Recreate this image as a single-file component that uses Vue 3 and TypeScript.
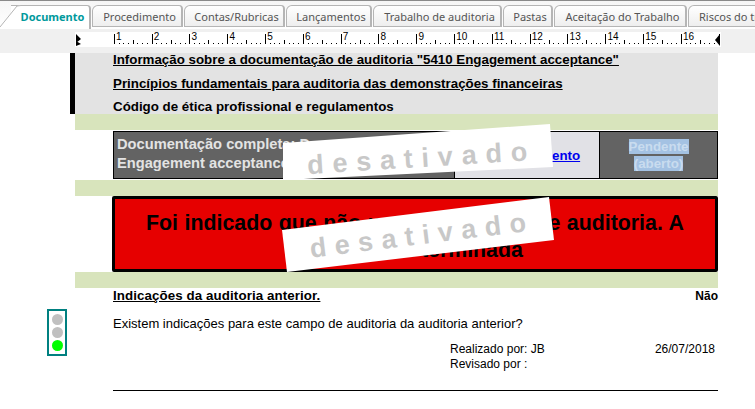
<script setup lang="ts">
const tabs = [
  { label: 'Documento', w: 80, active: true },
  { label: 'Procedimento', w: 91 },
  { label: 'Contas/Rubricas', w: 101 },
  { label: 'Lançamentos', w: 86 },
  { label: 'Trabalho de auditoria', w: 129 },
  { label: 'Pastas', w: 50 },
  { label: 'Aceitação do Trabalho', w: 133 },
  { label: 'Riscos do trabalho', w: 113 }
]
const step = 37.8 / 8
const ticks = Array.from({ length: 137 }, (_, i) => {
  const x = 2 + i * step
  const major = i % 8 === 0
  const mid = i % 4 === 0
  return { x, h: major ? 10 : mid ? 4 : 1, key: i }
})
const nums = Array.from({ length: 16 }, (_, i) => ({ n: i + 1, x: 41 + i * 37.8 }))
</script>

<template>
  <div class="app">
    <div class="topline"></div>
    <nav class="tabs">
      <div
        v-for="t in tabs"
        :key="t.label"
        class="tab"
        :class="{ active: t.active }"
        :style="{ width: t.w + 'px' }"
      >
        <svg v-if="t.active" class="slant" width="21" height="22" viewBox="0 0 21 22">
          <path d="M0 22 L17 1 L21 0 L21 22 Z" fill="#fff" />
          <path d="M0 22 L17 1 L21 0.5" fill="none" stroke="#b5b5b5" />
        </svg>
        <span class="lbl">{{ t.label }}</span>
      </div>
    </nav>
    <div class="rulerbar">
      <svg class="ruler" width="646" height="15" viewBox="0 0 646 15">
        <rect width="646" height="15" fill="#fff" />
        <rect v-for="t in ticks" :key="t.key" :x="Math.round(t.x + 37.8 - 1)" :y="12 - t.h" width="1" :height="t.h" fill="#000" />
        <text v-for="n in nums" :key="n.n" :x="n.x" y="8" class="num">{{ n.n }}</text>
        <path d="M1 2 L6 7 L1 11 Z M1 9 L6 12 L1 14 Z" fill="#000" />
        <path d="M645 2 L640 8 L645 14 Z" fill="#000" />
      </svg>
    </div>
    <main class="page">
      <section class="links">
        <a class="lnk">Informação sobre a documentação de auditoria "5410 Engagement acceptance"</a>
        <a class="lnk">Princípios fundamentais para auditoria das demonstrações financeiras</a>
        <div class="lnk plain">Código de ética profissional e regulamentos</div>
      </section>
      <div class="green"></div>
      <section class="statuswrap">
        <div class="statusrow">
          <div class="cell-title">Documentação completa: Documento<br />Engagement acceptance</div>
          <div class="cell-link"><a>Ver documento</a></div>
          <div class="cell-state"><span>Pendente</span><br /><span>(aberto)</span></div>
        </div>
      </section>
      <div class="green"></div>
      <section class="alert">
        <p>Foi indicado que não usa este campo de auditoria. A revisão foi terminada</p>
      </section>
      <div class="green"></div>
      <section class="bottom">
        <div class="light">
          <i></i><i></i><i class="on"></i>
        </div>
        <div class="info">
          <div class="head"><span class="h">Indicações da auditoria anterior.</span><b>Não</b></div>
          <p class="q">Existem indicações para este campo de auditoria da auditoria anterior?</p>
          <div class="sign">
            <div class="who">Realizado por: JB<br />Revisado por :</div>
            <div class="date">26/07/2018</div>
          </div>
          <div class="rule"></div>
        </div>
      </section>
    </main>
    <div class="stamp s1"><span>desativado</span></div>
    <div class="stamp s2"><span>desativado</span></div>
  </div>
</template>

<style scoped>
.app {
  position: relative;
  width: 755px;
  height: 409px;
  overflow: hidden;
  background: #fff;
  font-family: "Liberation Sans", Arial, sans-serif;
  color: #000;
}
.topline {
  height: 1px;
  background: #8a8a8a;
}
.tabs {
  display: flex;
  height: 28px;
  padding: 4px 0 0 11px;
  box-sizing: border-box;
  background: linear-gradient(#f6f6f6, #fff);
  overflow: hidden;
}
.tab {
  position: relative;
  flex: none;
  box-sizing: border-box;
  height: 22px;
  margin-right: 1px;
  padding-left: 5px;
  border: 1px solid #b5b5b5;
  border-right-width: 2px;
  border-radius: 6px 4px 0 0;
  background: linear-gradient(#ffffff, #eeeeee);
  text-align: center;
  font: 11px/21px "Noto Sans", sans-serif;
  color: #555;
  white-space: nowrap;
}
.tab.active {
  background: #fff;
  border-left: 0;
  border-radius: 0 4px 0 0;
  font-weight: 700;
  color: #00999c;
  border-bottom: 0;
  height: 24px;
}
.lbl {
  position: relative;
}
.slant {
  position: absolute;
  left: -11px;
  top: -1px;
}
.rulerbar {
  height: 24px;
  padding: 3px 0 0 75px;
  box-sizing: border-box;
  background: #f0f0f0;
}
.ruler {
  display: block;
}
.num {
  font: 10px "Liberation Sans", sans-serif;
  fill: #000;
}
.page {
  padding-left: 70px;
  width: 648px;
}
.links {
  height: 61px;
  box-sizing: border-box;
  border-left: 5px solid #000;
  background: #e3e3e3;
  padding-left: 38px;
}
.lnk {
  display: block;
  font-size: 13.33px;
  font-weight: 700;
  line-height: 13px;
  height: 23.5px;
  color: #000;
  text-decoration: underline;
  white-space: nowrap;
}
.lnk.plain {
  text-decoration: none;
}
.green {
  height: 16px;
  margin-left: 5px;
  background: #d8e4bc;
}
.statuswrap {
  margin-left: 43px;
  padding: 1px 0;
}
.statusrow {
  display: flex;
  height: 48px;
  box-sizing: border-box;
  border: 1px solid #000;
  background: #636363;
}
.cell-title {
  width: 340px;
  box-sizing: border-box;
  padding: 3px 0 0 3px;
  font-size: 14.67px;
  line-height: 19px;
  font-weight: 700;
  color: #e3e3e3;
  white-space: nowrap;
  overflow: hidden;
}
.cell-link {
  width: 146px;
  box-sizing: border-box;
  background: #e1e1e6;
  border-left: 1px solid #000;
  border-right: 1px solid #000;
  text-align: center;
  padding-top: 16px;
  font-size: 12px;
  font-weight: 700;
}
.cell-link a {
  color: #0000ee;
  text-decoration: underline;
  font-size: 13.33px;
  margin-left: 10px;
}
.cell-state {
  flex: 1;
  text-align: center;
  padding-top: 6px;
  font-size: 13.33px;
  line-height: 17px;
  font-weight: 700;
  color: #c9dcef;
}
.cell-state span {
  background: #a4c2e3;
}
.alert {
  margin-left: 42px;
  height: 76px;
  box-sizing: border-box;
  border: 3px solid #000;
  border-radius: 2px;
  background: #e60000;
  overflow: hidden;
  padding: 11px 30px 0;
}
.alert p {
  margin: 0;
  font-size: 21.33px;
  line-height: 27px;
  font-weight: 700;
  word-spacing: 0.6px;
  text-align: center;
}
.bottom {
  display: flex;
  margin-left: -23px;
  width: 671px;
}
.light {
  flex: none;
  display: flex;
  flex-direction: column;
  align-items: center;
  gap: 2px;
  box-sizing: border-box;
  width: 20px;
  height: 47px;
  margin: 21px 46px 0 0;
  padding-top: 3px;
  border: 2px solid #008080;
}
.light i {
  width: 11px;
  height: 11px;
  border-radius: 50%;
  background: #c0c0c0;
}
.light i.on {
  background: #00ff00;
}
.info {
  flex: 1;
  font-size: 12px;
}
.head {
  display: flex;
  justify-content: space-between;
  align-items: baseline;
  line-height: 16px;
}
.h {
  font-size: 13.33px;
  font-weight: 700;
  letter-spacing: 0.09px;
  text-decoration: underline;
}
.q {
  margin: 13px 0 0;
  font-size: 13px;
  line-height: 14px;
}
.sign {
  display: flex;
  justify-content: space-between;
  margin-top: 11px;
  padding: 0 3px 0 337px;
  line-height: 15px;
}
.rule {
  height: 1px;
  margin-top: 18px;
  background: #000;
}
.stamp {
  position: absolute;
  box-sizing: border-box;
  display: flex;
  align-items: center;
  justify-content: center;
  background: #fff;
  font-size: 27px;
  font-weight: 700;
  line-height: 32px;
  color: #c8c8c8;
  white-space: nowrap;
}
.stamp span {
  display: block;
}
.s1 {
  left: 283px;
  top: 124px;
  width: 271px;
  height: 56px;
  padding: 11px 0 0 6px;
  letter-spacing: 8.8px;
  clip-path: polygon(0 19px, 267px 0, 270px 43px, 0 56px);
}
.s1 span {
  transform: rotate(-3.6deg);
}
.s2 {
  left: 282px;
  top: 197px;
  width: 272px;
  height: 75px;
  padding: 1px 0 0 8px;
  letter-spacing: 8.5px;
  clip-path: polygon(0 33px, 267px 0, 272px 43px, 5px 75px);
}
.s2 span {
  transform: rotate(-7deg);
}
</style>
